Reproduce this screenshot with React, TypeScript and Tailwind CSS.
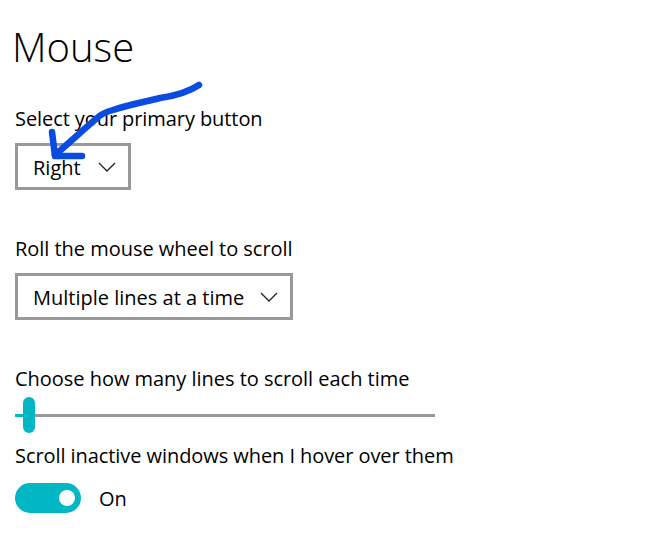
import React from 'react';

const Dropdown = ({ label, width }: { label: string; width: string }) => (
  <div className={`flex items-center justify-between h-[47px] border-[3px] border-[#999999] pl-[15px] pr-[12px] ${width}`}>
    <span className="text-[20px] text-black translate-y-px">{label}</span>
    <svg width="18" height="10" viewBox="0 0 18 10" fill="none" stroke="#222" strokeWidth="1.3">
      <path d="M1 1l8 8 8-8" />
    </svg>
  </div>
);

const App = () => {
  return (
    <div className="relative w-[646px] h-[547px] bg-white overflow-hidden font-['Open_Sans',sans-serif] text-black">
      <div className="pl-[15px] flex flex-col items-start">
        <h1 className="mt-[21px] -ml-[3px] text-[40px] leading-[52px] font-light">Mouse</h1>
        <p className="mt-[32px] text-[20px] leading-[28px] tracking-[-0.08px]">Select your primary button</p>
        <div className="mt-[10px]"><Dropdown label="Right" width="w-[116px]" /></div>
        <p className="mt-[45px] text-[20px] leading-[28px] tracking-[-0.03px]">Roll the mouse wheel to scroll</p>
        <div className="mt-[10px]"><Dropdown label="Multiple lines at a time" width="w-[278px]" /></div>
        <p className="mt-[45px] text-[20px] leading-[28px] tracking-[-0.03px]">Choose how many lines to scroll each time</p>
        <div className="relative mt-[4px] w-[420px] h-[36px] flex items-center">
          <div className="w-[8px] h-[3px] bg-[#00b7c3]" />
          <div className="flex-1 h-[3px] bg-[#999999]" />
          <div className="absolute left-[8px] top-0 w-[12px] h-[36px] rounded-full bg-[#00b7c3]" />
        </div>
        <p className="mt-[9px] text-[20px] leading-[28px] tracking-[-0.07px]">Scroll inactive windows when I hover over them</p>
        <div className="mt-[13px] flex items-center gap-[18px]">
          <div className="w-[66px] h-[30px] rounded-full bg-[#00b7c3] flex items-center justify-end pr-[6px]">
            <div className="w-[16px] h-[16px] rounded-full bg-white" />
          </div>
          <span className="text-[20px] translate-y-px">On</span>
        </div>
      </div>
      <svg className="absolute left-0 top-0" width="646" height="547" fill="none" stroke="#0a4be0" strokeWidth="6.5" strokeLinecap="round" strokeLinejoin="round">
        <path d="M199 85c-12 8-25 11-39 13-16 4-32 7-47 12-7 2-12 4-16 8-14 12-28 25-42 37" />
        <path d="M52 132l3 24h27" />
      </svg>
    </div>
  );
};

export default App;
